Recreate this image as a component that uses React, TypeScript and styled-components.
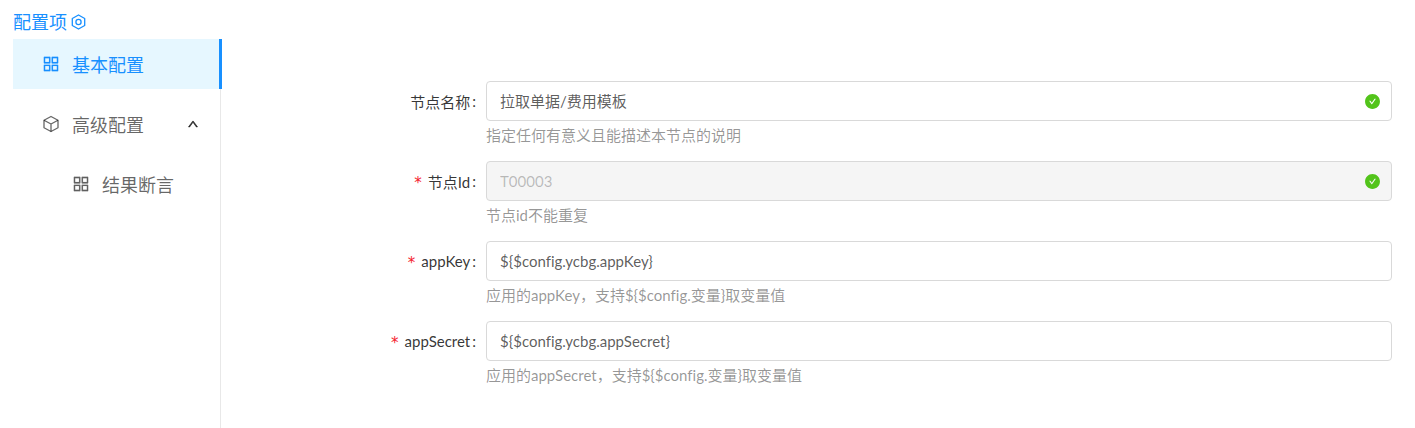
import React from 'react';
import styled, { createGlobalStyle } from 'styled-components';
import { AiOutlineAppstore, AiOutlineUp, AiFillCheckCircle } from 'react-icons/ai';

const GlobalStyle = createGlobalStyle`
  html, body {
    margin: 0;
    padding: 0;
    background: #fff;
  }
  body {
    font-family: Lato, 'Noto Sans CJK SC', sans-serif;
    font-size: 15px;
    font-variant-ligatures: none;
    color: rgba(0, 0, 0, 0.65);
  }
`;

const Page = styled.div`
  width: 1415px;
  height: 428px;
  overflow: hidden;
  display: flex;
  box-sizing: border-box;
  padding: 11px 23px 0 13px;
`;

const Sidebar = styled.aside`
  width: 208px;
  flex-shrink: 0;
  display: flex;
  flex-direction: column;
`;

const SideTitle = styled.div`
  height: 22px;
  margin-bottom: 6px;
  display: flex;
  align-items: center;
  gap: 4px;
  font-size: 18px;
  line-height: 22px;
  color: #1890ff;
`;

const Menu = styled.ul`
  list-style: none;
  margin: 0;
  padding: 0;
  flex: 1;
  border-right: 1px solid #e8e8e8;
`;

const MenuItem = styled.li<{ $active?: boolean; $sub?: boolean }>`
  position: relative;
  height: 50px;
  margin-bottom: 10px;
  display: flex;
  align-items: center;
  gap: 11px;
  padding-left: ${(p) => (p.$sub ? 58 : 28)}px;
  padding-right: 21px;
  width: 100%;
  box-sizing: border-box;
  font-size: 18px;
  color: ${(p) => (p.$active ? '#1890ff' : 'rgba(0, 0, 0, 0.6)')};
  background: ${(p) => (p.$active ? '#e6f7ff' : 'transparent')};

  ${(p) =>
    p.$active &&
    `&::after {
      content: '';
      position: absolute;
      top: 0;
      right: -2px;
      bottom: 0;
      border-right: 3px solid #1890ff;
    }`}
`;

const MenuLabel = styled.span`
  flex: 1;
`;

const Caret = styled(AiOutlineUp)`
  font-size: 12px;
  stroke-width: 60;
  stroke: currentColor;
  color: rgba(0, 0, 0, 0.75);
`;

const Grid = styled(AiOutlineAppstore)`
  flex-shrink: 0;
  font-size: 20px;
  stroke-width: 8;
  stroke: currentColor;
`;

const Form = styled.form`
  flex: 1;
  display: flex;
  flex-direction: column;
  gap: 10px;
  padding-top: 70px;
`;

const Row = styled.div`
  display: grid;
  grid-template-columns: 265px 1fr;
  height: 70px;
`;

const Label = styled.label`
  height: 40px;
  display: flex;
  justify-content: flex-end;
  align-items: center;
  padding-right: 10px;
  color: rgba(0, 0, 0, 0.8);
`;

const Required = styled.span`
  color: #f5222d;
  margin: 4px 6px 0 0;
  font-family: 'DejaVu Sans', sans-serif;
  font-size: 15px;
`;

const Colon = styled.span`
  margin-left: 2px;
`;

const Field = styled.div`
  position: relative;
`;

const Input = styled.input`
  display: block;
  width: 100%;
  height: 40px;
  box-sizing: border-box;
  padding: 0 13px 1px;
  border: 1px solid #d9d9d9;
  border-radius: 4px;
  font: inherit;
  font-variant-ligatures: none;
  color: rgba(0, 0, 0, 0.65);
  background: #fff;
  outline: none;

  &:disabled {
    background: #f5f5f5;
    color: rgba(0, 0, 0, 0.25);
  }
`;

const Valid = styled(AiFillCheckCircle)`
  position: absolute;
  top: 12px;
  right: 11px;
  font-size: 17px;
  color: #52c41a;
`;

const Help = styled.div`
  height: 30px;
  line-height: 28px;
  color: rgba(0, 0, 0, 0.42);
`;

const HexIcon = () => (
  <svg width="15" height="16" viewBox="0 0 15 16" fill="none" stroke="#1890ff" strokeWidth="1.3">
    <path d="M7.5 1 L13.7 4.5 V11.5 L7.5 15 L1.3 11.5 V4.5 Z" strokeLinejoin="round" />
    <circle cx="7.5" cy="8" r="2.6" />
  </svg>
);

const CubeIcon = () => (
  <svg width="20" height="20" viewBox="0 0 20 20" fill="none" stroke="currentColor" strokeWidth="1.3" strokeLinejoin="round">
    <path d="M10 2.5 L17 6.2 V13.8 L10 17.5 L3 13.8 V6.2 Z" />
    <path d="M3 6.2 L10 10 L17 6.2 M10 10 V17.5" />
  </svg>
);

const fields = [
  { label: '节点名称', value: '拉取单据/费用模板', help: '指定任何有意义且能描述本节点的说明', valid: true },
  { label: '节点Id', value: 'T00003', help: '节点id不能重复', required: true, disabled: true, valid: true },
  { label: 'appKey', value: '${$config.ycbg.appKey}', help: '应用的appKey，支持${$config.变量}取变量值', required: true },
  { label: 'appSecret', value: '${$config.ycbg.appSecret}', help: '应用的appSecret，支持${$config.变量}取变量值', required: true },
];

const App: React.FC = () => {
  return (
    <Page>
      <GlobalStyle />
      <Sidebar>
        <SideTitle>
          配置项 <HexIcon />
        </SideTitle>
        <Menu>
          <MenuItem $active>
            <Grid />
            <MenuLabel>基本配置</MenuLabel>
          </MenuItem>
          <MenuItem>
            <CubeIcon />
            <MenuLabel>高级配置</MenuLabel>
            <Caret />
          </MenuItem>
          <MenuItem $sub>
            <Grid />
            <MenuLabel>结果断言</MenuLabel>
          </MenuItem>
        </Menu>
      </Sidebar>
      <Form>
        {fields.map((f) => (
          <Row key={f.label}>
            <Label>
              {f.required && <Required>*</Required>}
              {f.label}
              <Colon>:</Colon>
            </Label>
            <div>
              <Field>
                <Input defaultValue={f.value} disabled={f.disabled} />
                {f.valid && <Valid />}
              </Field>
              <Help>{f.help}</Help>
            </div>
          </Row>
        ))}
      </Form>
    </Page>
  );
};

export default App;
